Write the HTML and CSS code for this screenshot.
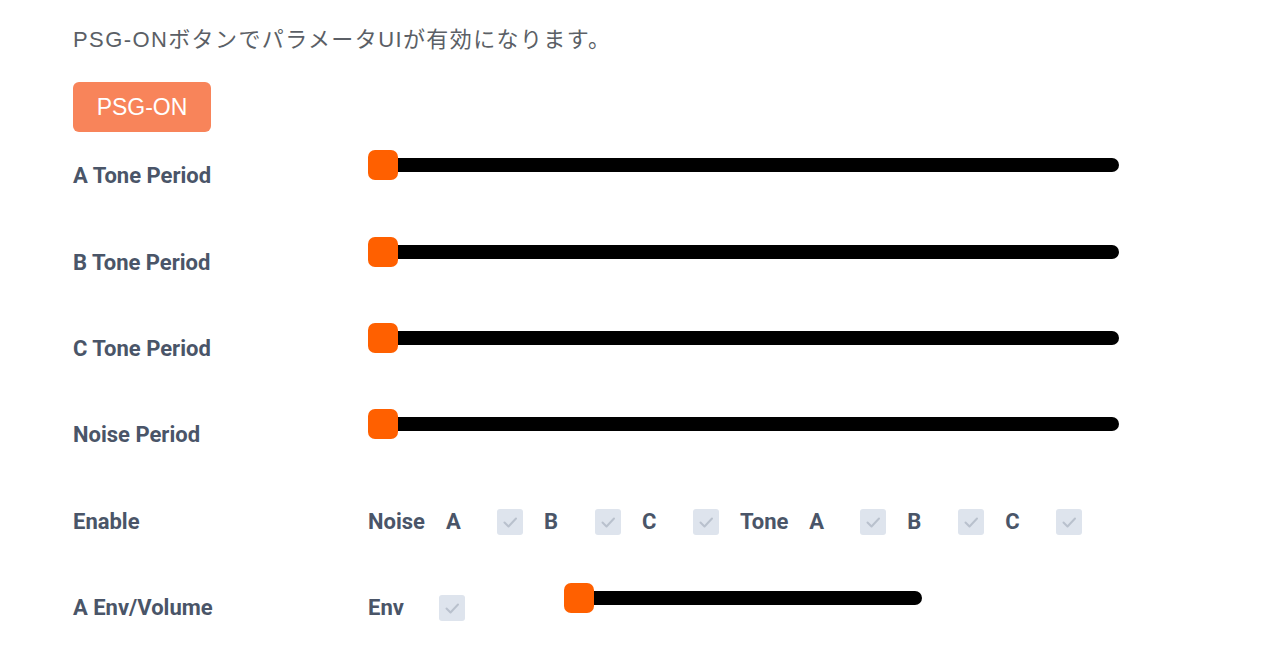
FILE: index.html
```html
<!DOCTYPE html>
<html lang="ja">
<head>
<meta charset="utf-8">
<title>PSG</title>
<link rel="stylesheet" href="styles.css">
</head>
<body>
<div class="page">
  <p class="intro">PSG-ONボタンでパラメータUIが有効になります。</p>
  <button class="psg-btn" type="button">PSG-ON</button>

  <div class="row">
    <label class="row-label">A Tone Period</label>
    <input class="slider slider-wide" type="range" min="0" max="4095" value="0">
  </div>
  <div class="row">
    <label class="row-label">B Tone Period</label>
    <input class="slider slider-wide" type="range" min="0" max="4095" value="0">
  </div>
  <div class="row">
    <label class="row-label">C Tone Period</label>
    <input class="slider slider-wide" type="range" min="0" max="4095" value="0">
  </div>
  <div class="row">
    <label class="row-label">Noise Period</label>
    <input class="slider slider-wide" type="range" min="0" max="31" value="0">
  </div>

  <div class="row">
    <label class="row-label">Enable</label>
    <div class="checks">
      <span class="group-name">Noise</span>
      <span class="ch">A</span>
      <span class="box"><svg viewBox="0 0 26 26" width="26" height="26"><polyline points="7.5,13.5 11.5,17.5 19,9.5"/></svg></span>
      <span class="ch">B</span>
      <span class="box"><svg viewBox="0 0 26 26" width="26" height="26"><polyline points="7.5,13.5 11.5,17.5 19,9.5"/></svg></span>
      <span class="ch">C</span>
      <span class="box"><svg viewBox="0 0 26 26" width="26" height="26"><polyline points="7.5,13.5 11.5,17.5 19,9.5"/></svg></span>
      <span class="group-name">Tone</span>
      <span class="ch">A</span>
      <span class="box"><svg viewBox="0 0 26 26" width="26" height="26"><polyline points="7.5,13.5 11.5,17.5 19,9.5"/></svg></span>
      <span class="ch">B</span>
      <span class="box"><svg viewBox="0 0 26 26" width="26" height="26"><polyline points="7.5,13.5 11.5,17.5 19,9.5"/></svg></span>
      <span class="ch">C</span>
      <span class="box"><svg viewBox="0 0 26 26" width="26" height="26"><polyline points="7.5,13.5 11.5,17.5 19,9.5"/></svg></span>
    </div>
  </div>

  <div class="row">
    <label class="row-label">A Env/Volume</label>
    <div class="checks">
      <span class="env-name">Env</span>
      <span class="box"><svg viewBox="0 0 26 26" width="26" height="26"><polyline points="7.5,13.5 11.5,17.5 19,9.5"/></svg></span>
      <input class="slider slider-env" type="range" min="0" max="15" value="0">
    </div>
  </div>

  <div class="row">
    <label class="row-label">B Env/Volume</label>
    <div class="checks">
      <span class="env-name">Env</span>
      <span class="box"><svg viewBox="0 0 26 26" width="26" height="26"><polyline points="7.5,13.5 11.5,17.5 19,9.5"/></svg></span>
      <input class="slider slider-env" type="range" min="0" max="15" value="0">
    </div>
  </div>
</div>
</body>
</html>
```

FILE: styles.css
```css
html, body {
  margin: 0;
  padding: 0;
  background: #ffffff;
}

.page {
  padding: 24px 0 0 73px;
  font-family: Roboto, "Noto Sans CJK JP", sans-serif;
}

.intro {
  margin: 0;
  font-family: "Liberation Sans", "Noto Sans CJK JP", sans-serif;
  font-size: 22px;
  line-height: 32px;
  letter-spacing: 1.4px;
  color: #5b5f66;
}

.psg-btn {
  display: block;
  margin-top: 26px;
  width: 138px;
  height: 50px;
  padding: 0;
  border: none;
  border-radius: 6px;
  background: #f8845a;
  color: #ffffff;
  font-family: "Liberation Sans", sans-serif;
  font-size: 23px;
}

.row {
  display: flex;
  align-items: center;
  height: 86.4px;
}

.row-label {
  flex: 0 0 295px;
  padding-top: 2px;
  font-family: Roboto, sans-serif;
  font-weight: 700;
  font-size: 22px;
  line-height: 26px;
  color: #4a5568;
}

.slider {
  -webkit-appearance: none;
  appearance: none;
  display: block;
  height: 30px;
  margin: 0;
  padding: 0;
  background: transparent;
}

.slider-wide {
  width: 751px;
  margin-bottom: 20px;
}

.slider-env {
  width: 358px;
  margin-left: 78px;
  margin-bottom: 20px;
}

.slider::-webkit-slider-runnable-track {
  height: 14px;
  background: #000000;
  border-radius: 7px;
}

.slider::-webkit-slider-thumb {
  -webkit-appearance: none;
  appearance: none;
  width: 30px;
  height: 30px;
  margin-top: -8px;
  border-radius: 7px;
  background: #ff6000;
}

.checks {
  display: flex;
  align-items: center;
  gap: 21px;
  padding-top: 2px;
  font-family: Roboto, sans-serif;
  font-weight: 700;
  font-size: 22px;
  line-height: 26px;
  color: #4a5568;
}

.ch {
  width: 30px;
}

.env-name {
  width: 50px;
}

.box {
  display: block;
  width: 26px;
  height: 26px;
  border-radius: 3px;
  background: #dee4ed;
}

.box svg {
  display: block;
}

.box polyline {
  fill: none;
  stroke: #b9c1cd;
  stroke-width: 2;
  stroke-linecap: round;
  stroke-linejoin: round;
}
```
